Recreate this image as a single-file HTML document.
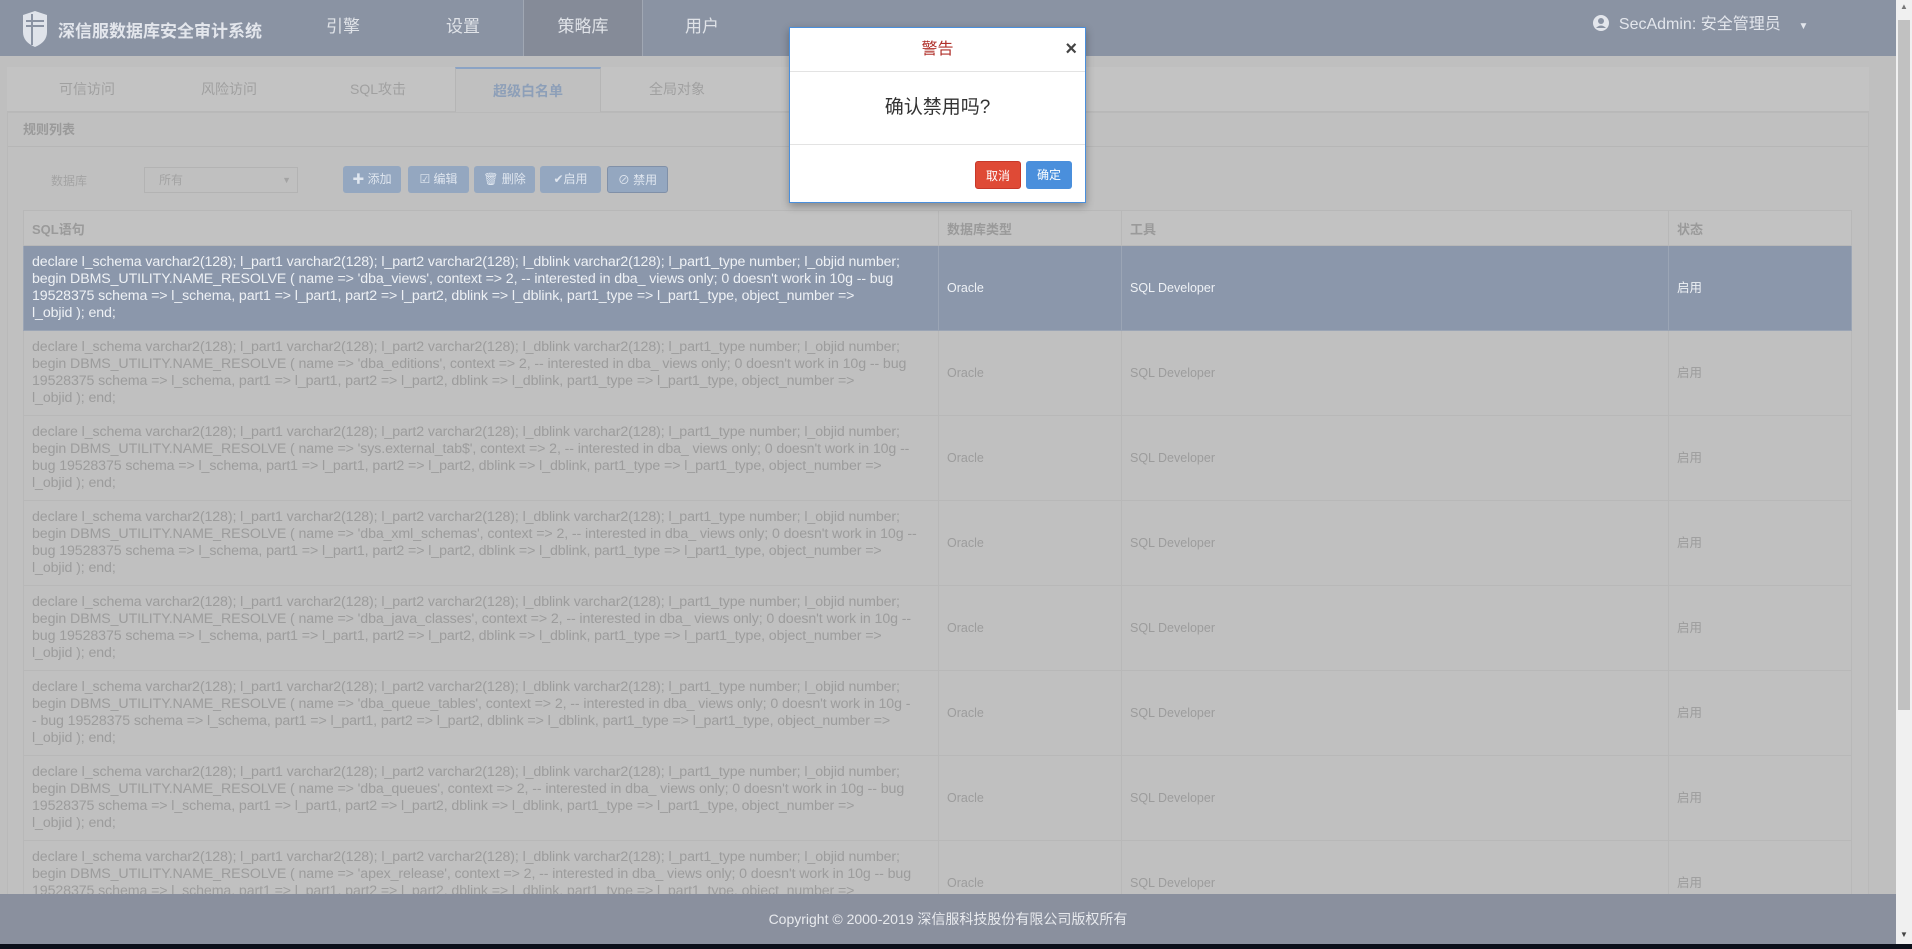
<!DOCTYPE html>
<html><head><meta charset="utf-8"><style>
*{box-sizing:border-box;margin:0;padding:0}
body{width:1912px;height:949px;overflow:hidden;background:#bfbfbf;font-family:"Liberation Sans","Noto Sans CJK SC",sans-serif;position:relative}
.hdr{position:absolute;left:0;top:0;width:1896px;height:56px;background:#8a93a3}
.logo{position:absolute;left:20px;top:10px}
.title{position:absolute;left:58px;top:17px;color:#e3e6ec;font-size:17px;font-weight:bold}
.nav{position:absolute;top:0;height:56px;line-height:54px;color:#e0e3e8;font-size:17px;text-align:center}
.user{position:absolute;left:1592px;top:14px;color:#e3e6ec;font-size:16px;line-height:22px}
.tabs{position:absolute;left:7px;top:67px;width:1862px;height:45px;background:#c3c3c3;border-bottom:1px solid #b8b8b8}
.tab{position:absolute;top:0;height:45px;line-height:44px;color:#a0a0a0;font-size:14px;text-align:center}
.panel{position:absolute;left:7px;top:112px;width:1862px;height:790px;background:#c0c0c0;border:1px solid #b9b9b9}
.ph{height:34px;border-bottom:1px solid #b6b6b6;padding-left:15px;line-height:33px;font-size:13px;font-weight:bold;color:#9a9a9a}
.btn{position:absolute;top:166px;height:27px;background:#94a7c0;border-radius:3px;color:#dfe6ef;font-size:12px;line-height:27px;text-align:center}
table{position:absolute;left:23px;top:210px;width:1829px;border-collapse:collapse;font-size:12.5px}
td,th{border:1px solid #b8b8b8;padding:0 8px;vertical-align:middle;text-align:left}
th{height:35px;color:#9a9a9a;font-size:13px;background:#c2c2c2}
td{height:85px;color:#9c9c9c;line-height:17px;white-space:nowrap}
td.s{font-size:14.2px;letter-spacing:-0.1px}
tr.sel td{background:#8b97ab;color:#eef1f5;border-color:#9ba5b5}
.foot{position:absolute;left:0;top:894px;width:1896px;height:50px;background:#8a909e;color:#e8eaee;font-size:14px;text-align:center;line-height:50px}
.black{position:absolute;left:0;top:944px;width:1912px;height:5px;background:#0b0f1a}
.sb{position:absolute;left:1896px;top:0;width:16px;height:944px;background:#f0f0f0}
.modal{position:absolute;left:789px;top:27px;width:297px;height:176px;background:#fff;border:1px solid #4a8fdc;box-shadow:0 3px 8px rgba(0,0,0,.3)}
.mh{height:44px;border-bottom:1px solid #e3e3e3;text-align:center;line-height:43px;color:#b0302a;font-size:16px;position:relative}
.mb{height:73px;border-bottom:1px solid #e3e3e3;text-align:center;line-height:72px;font-size:19px;color:#333}
.mbtn{position:absolute;top:133px;height:28px;width:46px;border-radius:3px;color:#fff;font-size:12px;line-height:28px;text-align:center}
</style></head><body>
<div class="hdr">
<svg class="logo" width="30" height="38" viewBox="0 0 30 38"><path d="M3 5 L15 1 L27 5 L27 22 Q27 32 15 37 Q3 32 3 22 Z" fill="#dfe3ea"/><path d="M12 4 V35 M6 16 H24 M6 11 H24" stroke="#8a93a3" stroke-width="2"/></svg>
<div class="title">深信服数据库安全审计系统</div>
<div class="nav" style="left:303px;width:80px">引擎</div>
<div class="nav" style="left:423px;width:80px">设置</div>
<div class="nav" style="left:523px;width:120px;background:#858b98;border-left:1px solid #a0a7b3;border-right:1px solid #a0a7b3">策略库</div>
<div class="nav" style="left:662px;width:80px">用户</div>
<div class="user"><svg width="18" height="18" viewBox="0 0 18 18" style="vertical-align:-3px"><circle cx="9" cy="9" r="8" fill="#e3e6ec"/><circle cx="9" cy="7" r="3" fill="#8a93a3"/><path d="M4 14 Q9 9 14 14" fill="#8a93a3"/></svg>&nbsp; SecAdmin: 安全管理员 &nbsp; &nbsp;<span style="font-size:10px">▼</span></div>
</div>
<div class="tabs">
<div class="tab" style="left:10px;width:140px">可信访问</div>
<div class="tab" style="left:152px;width:140px">风险访问</div>
<div class="tab" style="left:301px;width:140px">SQL攻击</div>
<div class="tab" style="left:448px;width:146px;background:#c0c0c0;border-top:2px solid #8ba3c4;border-left:1px solid #b5b5b5;border-right:1px solid #b5b5b5;height:46px;color:#8d9fb8;font-weight:bold">超级白名单</div>
<div class="tab" style="left:600px;width:140px">全局对象</div>
</div>
<div class="panel"><div class="ph">规则列表</div></div>
<div style="position:absolute;left:51px;top:172px;font-size:12px;color:#a3a3a3">数据库</div>
<div style="position:absolute;left:144px;top:167px;width:154px;height:26px;border:1px solid #b3b3b3;font-size:12px;color:#a3a3a3;line-height:24px;padding-left:14px">所有<span style="position:absolute;right:6px;font-size:9px">▼</span></div>
<div class="btn" style="left:343px;width:58px">✚ 添加</div>
<div class="btn" style="left:408px;width:61px">☑ 编辑</div>
<div class="btn" style="left:474px;width:61px">🗑 删除</div>
<div class="btn" style="left:540px;width:61px">✔启用</div>
<div class="btn" style="left:607px;width:61px;border:1px solid #8090a8">⊘ 禁用</div>
<table>
<tr><th style="width:915px">SQL语句</th><th style="width:183px">数据库类型</th><th style="width:547px">工具</th><th>状态</th></tr>
<tr class="sel"><td class="s">declare l_schema varchar2(128); l_part1 varchar2(128); l_part2 varchar2(128); l_dblink varchar2(128); l_part1_type number; l_objid number;<br>begin DBMS_UTILITY.NAME_RESOLVE ( name =&gt; 'dba_views', context =&gt; 2, -- interested in dba_ views only; 0 doesn't work in 10g -- bug<br>19528375 schema =&gt; l_schema, part1 =&gt; l_part1, part2 =&gt; l_part2, dblink =&gt; l_dblink, part1_type =&gt; l_part1_type, object_number =&gt;<br>l_objid ); end;</td><td>Oracle</td><td>SQL Developer</td><td>启用</td></tr>
<tr><td class="s">declare l_schema varchar2(128); l_part1 varchar2(128); l_part2 varchar2(128); l_dblink varchar2(128); l_part1_type number; l_objid number;<br>begin DBMS_UTILITY.NAME_RESOLVE ( name =&gt; 'dba_editions', context =&gt; 2, -- interested in dba_ views only; 0 doesn't work in 10g -- bug<br>19528375 schema =&gt; l_schema, part1 =&gt; l_part1, part2 =&gt; l_part2, dblink =&gt; l_dblink, part1_type =&gt; l_part1_type, object_number =&gt;<br>l_objid ); end;</td><td>Oracle</td><td>SQL Developer</td><td>启用</td></tr>
<tr><td class="s">declare l_schema varchar2(128); l_part1 varchar2(128); l_part2 varchar2(128); l_dblink varchar2(128); l_part1_type number; l_objid number;<br>begin DBMS_UTILITY.NAME_RESOLVE ( name =&gt; 'sys.external_tab$', context =&gt; 2, -- interested in dba_ views only; 0 doesn't work in 10g --<br>bug 19528375 schema =&gt; l_schema, part1 =&gt; l_part1, part2 =&gt; l_part2, dblink =&gt; l_dblink, part1_type =&gt; l_part1_type, object_number =&gt;<br>l_objid ); end;</td><td>Oracle</td><td>SQL Developer</td><td>启用</td></tr>
<tr><td class="s">declare l_schema varchar2(128); l_part1 varchar2(128); l_part2 varchar2(128); l_dblink varchar2(128); l_part1_type number; l_objid number;<br>begin DBMS_UTILITY.NAME_RESOLVE ( name =&gt; 'dba_xml_schemas', context =&gt; 2, -- interested in dba_ views only; 0 doesn't work in 10g --<br>bug 19528375 schema =&gt; l_schema, part1 =&gt; l_part1, part2 =&gt; l_part2, dblink =&gt; l_dblink, part1_type =&gt; l_part1_type, object_number =&gt;<br>l_objid ); end;</td><td>Oracle</td><td>SQL Developer</td><td>启用</td></tr>
<tr><td class="s">declare l_schema varchar2(128); l_part1 varchar2(128); l_part2 varchar2(128); l_dblink varchar2(128); l_part1_type number; l_objid number;<br>begin DBMS_UTILITY.NAME_RESOLVE ( name =&gt; 'dba_java_classes', context =&gt; 2, -- interested in dba_ views only; 0 doesn't work in 10g --<br>bug 19528375 schema =&gt; l_schema, part1 =&gt; l_part1, part2 =&gt; l_part2, dblink =&gt; l_dblink, part1_type =&gt; l_part1_type, object_number =&gt;<br>l_objid ); end;</td><td>Oracle</td><td>SQL Developer</td><td>启用</td></tr>
<tr><td class="s">declare l_schema varchar2(128); l_part1 varchar2(128); l_part2 varchar2(128); l_dblink varchar2(128); l_part1_type number; l_objid number;<br>begin DBMS_UTILITY.NAME_RESOLVE ( name =&gt; 'dba_queue_tables', context =&gt; 2, -- interested in dba_ views only; 0 doesn't work in 10g -<br>- bug 19528375 schema =&gt; l_schema, part1 =&gt; l_part1, part2 =&gt; l_part2, dblink =&gt; l_dblink, part1_type =&gt; l_part1_type, object_number =&gt;<br>l_objid ); end;</td><td>Oracle</td><td>SQL Developer</td><td>启用</td></tr>
<tr><td class="s">declare l_schema varchar2(128); l_part1 varchar2(128); l_part2 varchar2(128); l_dblink varchar2(128); l_part1_type number; l_objid number;<br>begin DBMS_UTILITY.NAME_RESOLVE ( name =&gt; 'dba_queues', context =&gt; 2, -- interested in dba_ views only; 0 doesn't work in 10g -- bug<br>19528375 schema =&gt; l_schema, part1 =&gt; l_part1, part2 =&gt; l_part2, dblink =&gt; l_dblink, part1_type =&gt; l_part1_type, object_number =&gt;<br>l_objid ); end;</td><td>Oracle</td><td>SQL Developer</td><td>启用</td></tr>
<tr><td class="s">declare l_schema varchar2(128); l_part1 varchar2(128); l_part2 varchar2(128); l_dblink varchar2(128); l_part1_type number; l_objid number;<br>begin DBMS_UTILITY.NAME_RESOLVE ( name =&gt; 'apex_release', context =&gt; 2, -- interested in dba_ views only; 0 doesn't work in 10g -- bug<br>19528375 schema =&gt; l_schema, part1 =&gt; l_part1, part2 =&gt; l_part2, dblink =&gt; l_dblink, part1_type =&gt; l_part1_type, object_number =&gt;<br>l_objid ); end;</td><td>Oracle</td><td>SQL Developer</td><td>启用</td></tr>
</table>
<div class="foot">Copyright © 2000-2019 深信服科技股份有限公司版权所有</div>
<div class="black"></div>
<div class="sb"><div style="position:absolute;left:2px;top:20px;width:12px;height:690px;background:#c1c1c1"></div><div style="position:absolute;left:4px;top:2px;font-size:8px;color:#777">▲</div><div style="position:absolute;left:4px;top:930px;font-size:8px;color:#444">▼</div></div>
<div class="modal">
<div class="mh">警告<span style="position:absolute;right:8px;top:0;color:#444;font-size:20px;font-weight:bold">×</span></div>
<div class="mb">确认禁用吗?</div>
<div class="mbtn" style="left:185px;background:#df4a36;border:1px solid #c7382a">取消</div>
<div class="mbtn" style="left:236px;background:#4a8fdc">确定</div>
</div>
</body></html>
